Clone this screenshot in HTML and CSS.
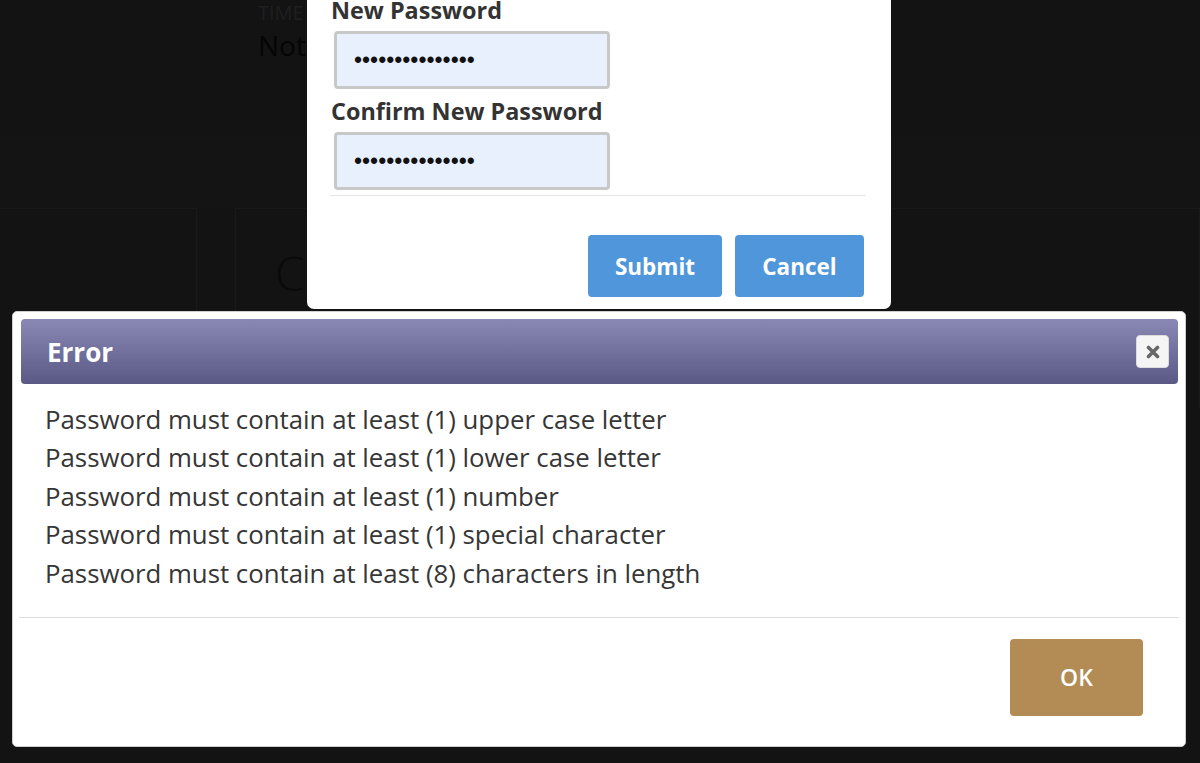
FILE: index.html
```html
<!DOCTYPE html>
<html lang="en">
<head>
<meta charset="utf-8">
<title>Change Password</title>
<link rel="stylesheet" href="styles.css">
</head>
<body>
<div class="page">
  <div class="hdr">
    <div class="hdr-label">TIME</div>
    <div class="hdr-value">Not</div>
  </div>
  <div class="band"></div>
  <div class="panels">
    <div class="panel panel-side"></div>
    <div class="panel panel-main"><div class="panel-title">C</div></div>
  </div>
</div>

<div class="modal">
  <div class="label">New Password</div>
  <div class="field"><span class="dots">•••••••••••••••</span></div>
  <div class="label label-next">Confirm New Password</div>
  <div class="field"><span class="dots">•••••••••••••••</span></div>
  <div class="rule"></div>
  <div class="actions">
    <button class="btn btn-blue btn-submit">Submit</button>
    <button class="btn btn-blue btn-cancel">Cancel</button>
  </div>
</div>

<div class="dialog">
  <div class="dlg-head">
    <span class="dlg-title">Error</span>
    <span class="dlg-close">
      <svg width="14" height="14" viewBox="0 0 14 14"><path d="M2.5 2.5 L11.5 11.5 M11.5 2.5 L2.5 11.5" stroke="#676767" stroke-width="3.6" stroke-linecap="round" fill="none"/></svg>
    </span>
  </div>
  <div class="dlg-body">
    <div>Password must contain at least (1) upper case letter</div>
    <div>Password must contain at least (1) lower case letter</div>
    <div>Password must contain at least (1) number</div>
    <div>Password must contain at least (1) special character</div>
    <div>Password must contain at least (8) characters in length</div>
  </div>
  <div class="dlg-rule"></div>
  <div class="dlg-foot">
    <button class="btn btn-ok">OK</button>
  </div>
</div>
</body>
</html>
```

FILE: styles.css
```css
html, body {
  margin: 0;
  padding: 0;
}

body {
  background: #131313;
  font-family: "Open Sans", "Noto Sans", sans-serif;
  width: 1200px;
  height: 763px;
  overflow: hidden;
  position: relative;
}

/* background page (dimmed) */
.page {
  display: flex;
  flex-direction: column;
}

.hdr {
  height: 137px;
  padding-left: 258px;
  box-sizing: border-box;
}

.hdr-label {
  font-size: 20px;
  line-height: 24px;
  color: #1f1f1f;
  margin-top: 1px;
}

.hdr-value {
  font-size: 28px;
  line-height: 40px;
  color: #050505;
}

.band {
  height: 71px;
  background: #141414;
}

.panels {
  display: flex;
  gap: 38px;
  height: 200px;
}

.panel {
  border: 1px solid #191919;
  border-bottom: none;
}

.panel-side {
  width: 196px;
  border-left: none;
}

.panel-main {
  flex: 1;
  padding: 34px 0 0 39px;
}

.panel-title {
  font-size: 48px;
  line-height: 60px;
  font-weight: 300;
  color: #0a0a0a;
}

/* change password modal */
.modal {
  position: absolute;
  left: 307px;
  top: -36px;
  width: 584px;
  box-sizing: border-box;
  padding: 31px 25px 12px 23px;
  background: #fff;
  border-radius: 7px;
}

.label {
  font-weight: 700;
  font-size: 23.4px;
  line-height: 30px;
  color: #333;
  padding-left: 1px;
}

.label-next {
  margin-top: 7px;
}

.field {
  width: 276px;
  height: 58px;
  box-sizing: border-box;
  margin: 6px 0 0 4px;
  border: 3px solid #c8c8c8;
  border-radius: 4px;
  background: #e8f0fe;
  display: flex;
  align-items: center;
  padding-left: 17px;
}

.dots {
  font-family: "Liberation Sans", Arial, sans-serif;
  font-size: 23px;
  line-height: 20px;
  color: #111;
}

.rule {
  height: 1px;
  background: #e6e6e6;
  margin-top: 5px;
}

.actions {
  display: flex;
  justify-content: flex-end;
  gap: 13px;
  margin-top: 39px;
  padding-right: 2px;
}

.btn {
  font-family: "Open Sans", "Noto Sans", sans-serif;
  border: none;
  border-radius: 4px;
  color: #fff;
  cursor: pointer;
  display: flex;
  align-items: center;
  justify-content: center;
  padding: 0;
}

.btn-blue {
  height: 62px;
  background: #5096da;
  font-size: 22.5px;
  font-weight: 700;
}

.btn-submit {
  width: 134px;
}

.btn-cancel {
  width: 129px;
}

/* error dialog */
.dialog {
  position: absolute;
  left: 12px;
  top: 311px;
  width: 1174px;
  height: 436px;
  box-sizing: border-box;
  background: #fff;
  border: 1px solid #cfcfcf;
  border-radius: 5px;
  padding: 7px 7px 0 8px;
  display: flex;
  flex-direction: column;
}

.dlg-head {
  height: 65px;
  flex: none;
  box-sizing: border-box;
  border-radius: 4px;
  background: linear-gradient(#8a88b5, #5a5985);
  display: flex;
  align-items: center;
  justify-content: space-between;
  padding: 0 9px 0 26px;
}

.dlg-title {
  color: #fff;
  font-size: 26px;
  font-weight: 700;
  line-height: 34px;
}

.dlg-close {
  width: 33px;
  height: 33px;
  box-sizing: border-box;
  background: #f5f5f5;
  border: 1px solid #dcdcdc;
  border-radius: 4px;
  display: flex;
  align-items: center;
  justify-content: center;
}

.dlg-body {
  padding: 15.5px 0 0 24px;
  font-size: 25.8px;
  line-height: 38.5px;
  color: #363636;
}

.dlg-rule {
  height: 1px;
  background: #dcdcdc;
  margin: 24.5px -1px 0 -2px;
}

.dlg-foot {
  display: flex;
  justify-content: flex-end;
  padding: 21px 35px 0 0;
}

.btn-ok {
  width: 133px;
  height: 77px;
  background: #b38b54;
  font-size: 23px;
  font-weight: 600;
}
```
